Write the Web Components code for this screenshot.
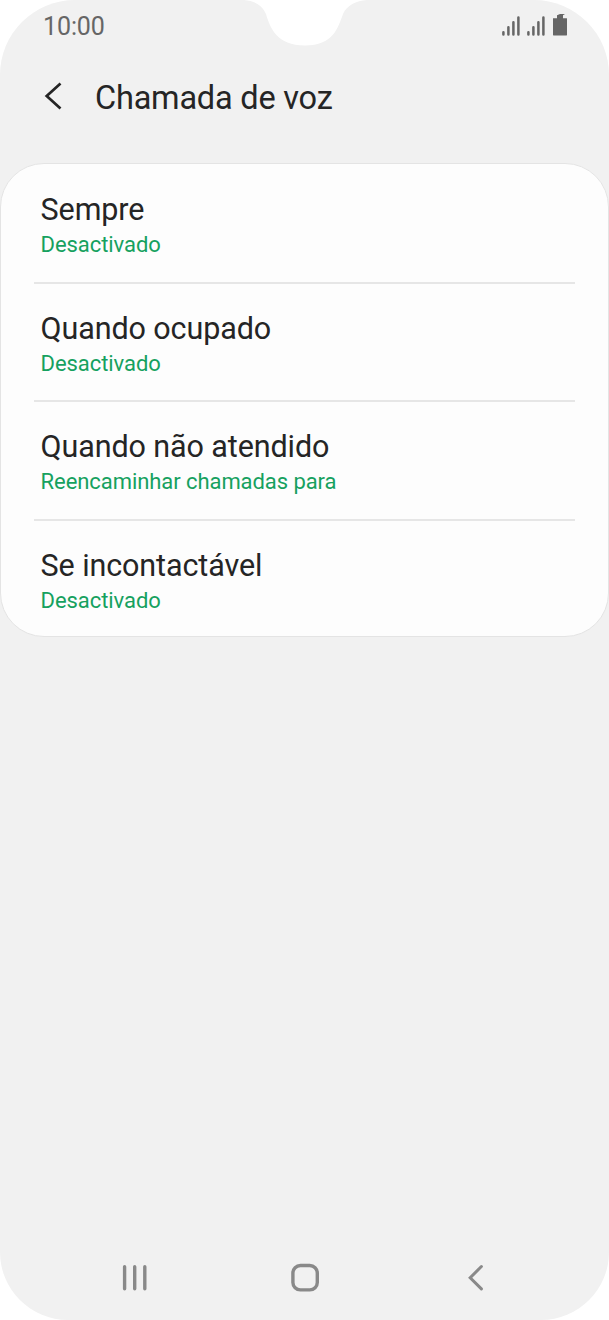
<!DOCTYPE html>
<html lang="pt">
<head>
<meta charset="utf-8">
<title>Chamada de voz</title>
<style>
html, body { margin: 0; background: #fff; }
body { font-family: Roboto, sans-serif; color: #252525; }
</style>
</head>
<body>
<phone-screen>
  <status-bar slot="top" time="10:00"></status-bar>
  <title-bar slot="top">Chamada de voz</title-bar>
  <settings-card>
    <settings-item><span>Sempre</span><span slot="state">Desactivado</span></settings-item>
    <settings-item><span>Quando ocupado</span><span slot="state">Desactivado</span></settings-item>
    <settings-item><span>Quando não atendido</span><span slot="state">Reencaminhar chamadas para</span></settings-item>
    <settings-item><span>Se incontactável</span><span slot="state">Desactivado</span></settings-item>
  </settings-card>
  <nav-bar slot="bottom"></nav-bar>
</phone-screen>
<script>
function define(name, html) {
  customElements.define(name, class extends HTMLElement {
    constructor() {
      super();
      const t = document.createElement('template');
      t.innerHTML = html;
      this.attachShadow({ mode: 'open' }).append(t.content.cloneNode(true));
      const time = this.shadowRoot.querySelector('time');
      if (time) time.textContent = this.getAttribute('time');
    }
  });
}

define('phone-screen', `
<style>
:host { display: flex; flex-direction: column; position: relative; box-sizing: border-box; width: 609px; height: 1320px; background: #f1f1f1; border-radius: 75px 75px 68px 68px; overflow: hidden; }
.notch { position: absolute; left: 240px; top: 0; }
main { flex: 1; }
</style>
<svg class="notch" width="130" height="48"><path fill="#fff" d="M4 0C15 1 22 5 26 14C30 28 37 45.5 65 45.5C93 45.5 98 28 103 14C107 5 116 1 127 0Z"/></svg>
<slot name="top"></slot>
<main><slot></slot></main>
<slot name="bottom"></slot>`);

define('status-bar', `
<style>
:host { display: flex; justify-content: space-between; align-items: center; height: 52px; padding: 0 41px 0 43px; color: #666; font-size: 25px; letter-spacing: -0.1px; line-height: 52px; }
time { padding-top: 2px; }
svg { display: block; }
</style>
<time></time>
<svg width="67" height="26" viewBox="501 13 67 26">
  <g stroke="#666" stroke-width="2.5" stroke-linecap="round">
    <path d="M503.4 32.3v2.2M508.4 27.3v7.2M513.4 22.3v12.2M518.4 17.4v17.1"/>
    <path d="M528.4 32.3v2.2M533.4 27.3v7.2M538.4 22.3v12.2M543.4 17.4v17.1"/>
  </g>
  <path fill="#666" d="M553 18.2H557V15.3L560 14H565L563 15.2V18.2H566.6L567 18.6V35L566.6 35.4H553.4L553 35Z"/>
</svg>`);

define('title-bar', `
<style>
:host { display: flex; align-items: center; height: 90px; padding-left: 43px; margin-bottom: 21px; gap: 30px; font-size: 32.5px; letter-spacing: -0.21px; line-height: 90px; }
svg { display: block; margin-top: -2px; }
span { padding-top: 2px; }
</style>
<svg width="22" height="32" viewBox="43 80 22 32"><path d="M60.5 83.5L46.7 96L60.5 108.5" fill="none" stroke="#252525" stroke-width="2.7"/></svg>
<span><slot></slot></span>`);

define('settings-card', `
<style>
:host { display: block; box-sizing: border-box; height: 474px; padding-top: 1px; background: #fdfdfd; border: 1px solid #e4e4e4; border-radius: 44px; }
::slotted(:not(:last-child)) { --divider: #e6e6e6; }
</style>
<slot></slot>`);

define('settings-item', `
<style>
:host { display: block; box-sizing: border-box; height: 118.5px; margin: 0 33px; padding: 26px 6.6px 0; border-bottom: 2px solid var(--divider, transparent); }
.name { font-size: 30.5px; letter-spacing: -0.1px; line-height: 37px; }
.state { font-size: 22px; letter-spacing: -0.07px; line-height: 34px; color: #16a15f; }
</style>
<div class="name"><slot></slot></div>
<div class="state"><slot name="state"></slot></div>`);

define('nav-bar', `
<style>
:host { display: grid; grid-template-columns: repeat(3, 171px); justify-content: center; justify-items: center; align-items: center; height: 84px; }
svg { display: block; fill: none; stroke: #898989; stroke-width: 3.4; stroke-linecap: round; }
</style>
<svg width="32" height="32" viewBox="118 1262 32 32"><path d="M124.6 1266.7v22M134.7 1266.7v22M144.8 1266.7v22"/></svg>
<svg width="32" height="32" viewBox="289 1262 32 32"><rect x="292.9" y="1265.5" width="24.4" height="24.4" rx="7.5"/></svg>
<svg width="32" height="32" viewBox="460 1262 32 32"><path d="M481.4 1266.5L470.2 1277.7L481.4 1288.9" stroke-width="3"/></svg>`);
</script>
</body>
</html>
